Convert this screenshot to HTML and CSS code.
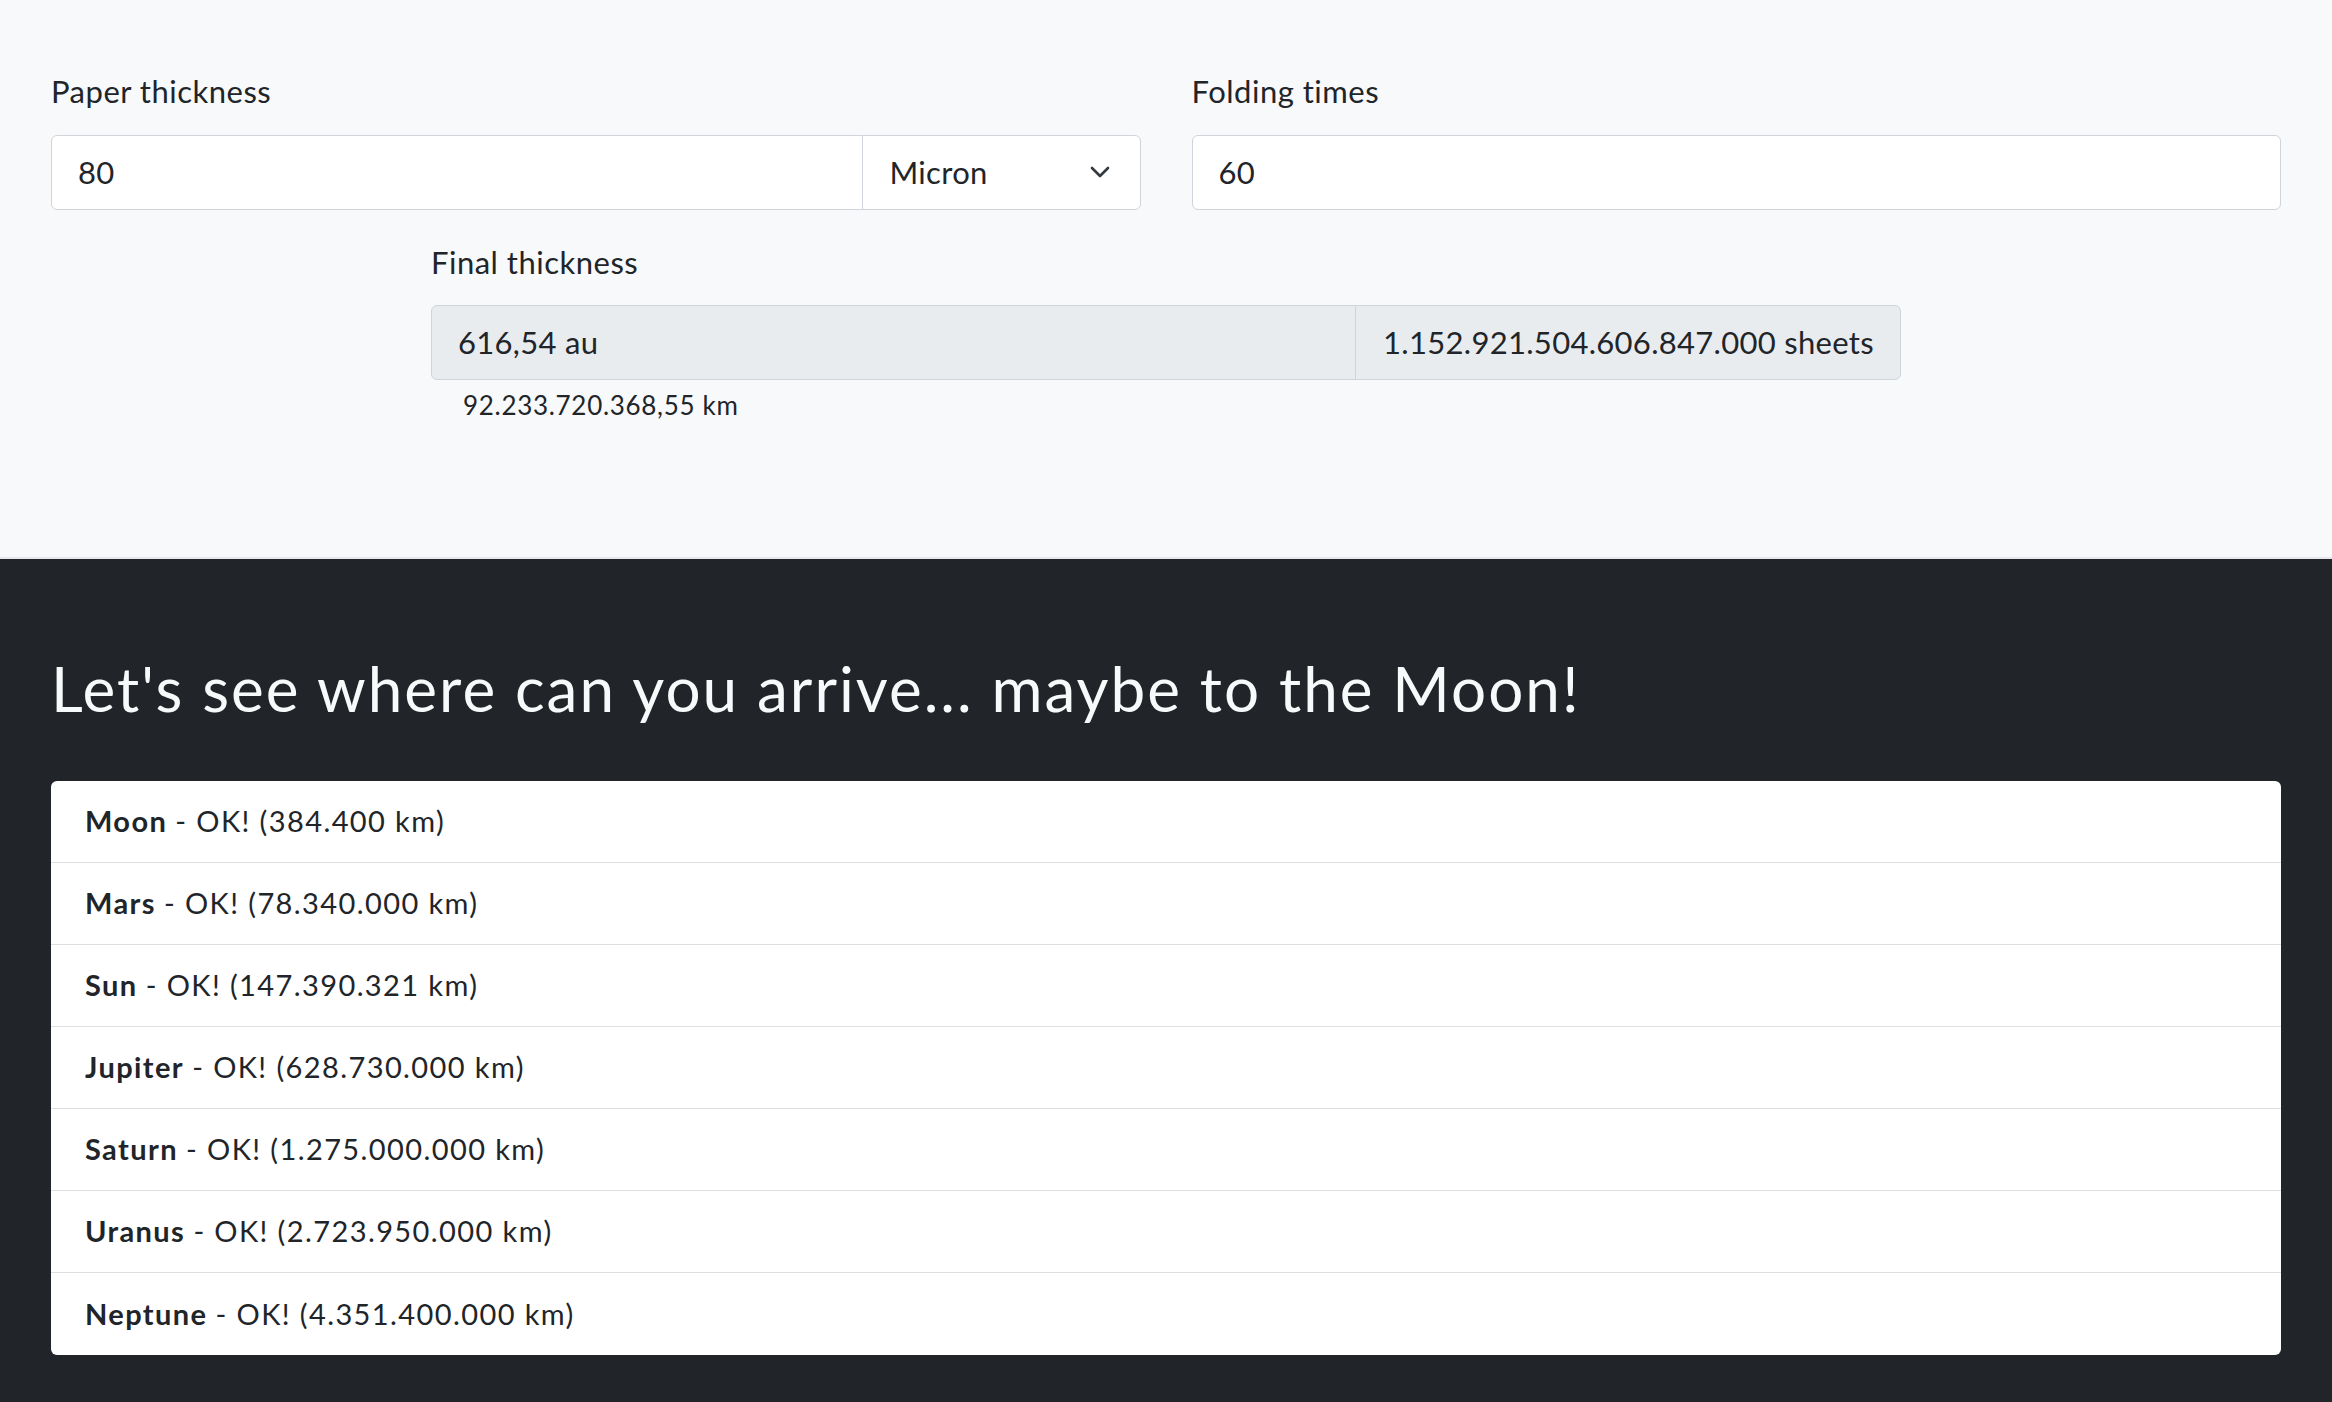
FILE: index.html
```html
<!DOCTYPE html>
<html lang="en">
<head>
<meta charset="utf-8">
<title>Paper folding</title>
<link rel="stylesheet" href="styles.css">
</head>
<body>
<section class="calc">
  <div class="row">
    <div class="field">
      <label class="label">Paper thickness</label>
      <div class="group">
        <div class="control grow">80</div>
        <div class="control select">
          <span>Micron</span>
          <svg class="chev" width="20" height="12" viewBox="0 0 20 12"><path d="M2 2 L10 10 L18 2" fill="none" stroke="#343a40" stroke-width="2.6" stroke-linecap="round" stroke-linejoin="round"/></svg>
        </div>
      </div>
    </div>
    <div class="field">
      <label class="label">Folding times</label>
      <div class="group">
        <div class="control grow">60</div>
      </div>
    </div>
  </div>
  <div class="final">
    <label class="label">Final thickness</label>
    <div class="group">
      <div class="control grow readonly">616,54 au</div>
      <div class="control addon">1.152.921.504.606.847.000 sheets</div>
    </div>
    <div class="small">92.233.720.368,55 km</div>
  </div>
</section>
<section class="results">
  <h1 class="title">Let's see where can you arrive... maybe to the Moon!</h1>
  <ul class="list">
    <li class="item"><b>Moon</b> - OK! (384.400 km)</li>
    <li class="item"><b>Mars</b> - OK! (78.340.000 km)</li>
    <li class="item"><b>Sun</b> - OK! (147.390.321 km)</li>
    <li class="item"><b>Jupiter</b> - OK! (628.730.000 km)</li>
    <li class="item"><b>Saturn</b> - OK! (1.275.000.000 km)</li>
    <li class="item"><b>Uranus</b> - OK! (2.723.950.000 km)</li>
    <li class="item"><b>Neptune</b> - OK! (4.351.400.000 km)</li>
  </ul>
</section>
</body>
</html>
```
FILE: styles.css
```css
* { box-sizing: border-box; }
html, body { margin: 0; padding: 0; }
body {
  font-family: Lato, "Noto Sans", sans-serif;
  color: #212529;
  background: #212529;
}
.calc {
  background: #f8f9fa;
  padding: 68px 51px 0;
  height: 559px;
  border-bottom: 2px solid #e6e8eb;
}
.row {
  display: grid;
  grid-template-columns: 1fr 1fr;
  column-gap: 51px;
}
.label {
  display: block;
  font-size: 31px;
  letter-spacing: 0.5px;
  line-height: 46px;
  margin-bottom: 21px;
}
.group {
  display: flex;
  height: 75px;
}
.control {
  display: flex;
  align-items: center;
  font-size: 31px;
  letter-spacing: 0.3px;
  background: #fff;
  border: 1px solid #ced4da;
  padding: 0 26px 2px;
}
.group .control:first-child { border-radius: 6px 0 0 6px; }
.group .control:last-child { border-radius: 0 6px 6px 0; }
.group .control:only-child { border-radius: 6px; }
.group .control + .control { border-left: 1px solid #ced4da; margin-left: -1px; }
.grow { flex: 1; }
.select {
  width: 279px;
  padding: 0 30px 2px 27px;
  justify-content: space-between;
}
.chev { display: block; }
.final {
  width: 1470px;
  margin: 29px auto 0;
}
.final .label { margin-bottom: 20px; }
.readonly { background: #e9ecef; }
.addon {
  background: #e9ecef;
  padding: 0 26px 2px 27px;
  white-space: nowrap;
}
.small {
  font-size: 26px;
  letter-spacing: 0.7px;
  line-height: 36px;
  padding: 7px 0 0 32px;
}
.results {
  padding: 92px 51px 48px;
}
.title {
  margin: 0 0 56px;
  font-weight: 400;
  font-size: 62px;
  letter-spacing: 2px;
  line-height: 74px;
  color: #f8f9fa;
}
.list {
  list-style: none;
  margin: 0;
  padding: 0;
  background: #fff;
  border-radius: 6px;
  overflow: hidden;
}
.item {
  height: 82px;
  display: flex;
  align-items: center;
  padding: 0 34px 2px;
  font-size: 29px;
  letter-spacing: 1.4px;
  border-bottom: 1px solid #dfdfdf;
}
.item:last-child { border-bottom: 0; height: 82px; }
.item b { font-weight: 700; margin-right: 0.28em; }
```
